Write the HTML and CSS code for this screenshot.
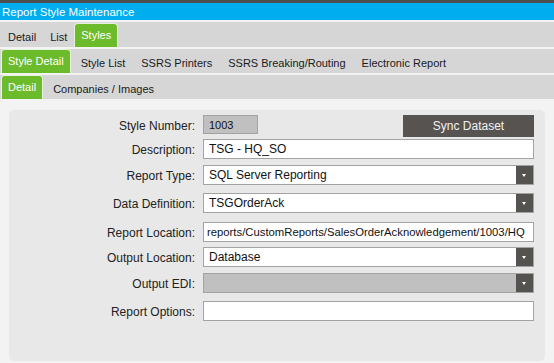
FILE: index.html
```html
<!DOCTYPE html>
<html lang="en">
<head>
    <meta charset="UTF-8">
    <meta name="viewport" content="width=device-width, initial-scale=1.0">
    <title>Report Style Maintenance</title>
    <link rel="stylesheet" href="styles.css">
</head>
<body>
    <div class="chrome"></div>
    <div class="titlebar">Report Style Maintenance</div>

    <!-- Main tabs -->
    <div class="tabbar tabbar-main">
        <span class="tab">Detail</span>
        <span class="tab">List</span>
        <span class="tab active">Styles</span>
    </div>

    <!-- Styles sub tabs -->
    <div class="tabbar">
        <span class="tab active">Style Detail</span>
        <span class="tab">Style List</span>
        <span class="tab">SSRS Printers</span>
        <span class="tab">SSRS Breaking/Routing</span>
        <span class="tab">Electronic Report</span>
    </div>

    <div class="tabbar">
        <span class="tab active">Detail</span>
        <span class="tab">Companies / Images</span>
    </div>

    <div class="panel">
        <div class="form">
            <label class="label">Style Number:</label>
            <div class="first-row">
                <input type="text" class="field field-number" value="1003" readonly>
                <button class="sync-btn">Sync Dataset</button>
            </div>

            <label class="label">Description:</label>
            <input type="text" class="field" value="TSG - HQ_SO">

            <label class="label">Report Type:</label>
            <div class="select">
                <span class="select-text">SQL Server Reporting</span>
                <span class="select-btn"></span>
            </div>

            <label class="label">Data Definition:</label>
            <div class="select">
                <span class="select-text">TSGOrderAck</span>
                <span class="select-btn"></span>
            </div>

            <label class="label">Report Location:</label>
            <div class="field field-path">reports/CustomReports/SalesOrderAcknowledgement/1003/HQ</div>

            <label class="label">Output Location:</label>
            <div class="select">
                <span class="select-text">Database</span>
                <span class="select-btn"></span>
            </div>

            <label class="label">Output EDI:</label>
            <div class="select disabled">
                <span class="select-text"></span>
                <span class="select-btn"></span>
            </div>

            <label class="label">Report Options:</label>
            <input type="text" class="field" value="">
        </div>
    </div>
</body>
</html>
```

FILE: styles.css
```css
* {
    box-sizing: border-box;
    margin: 0;
    padding: 0;
}

body {
    background: #f3f3f3;
    font-family: 'Liberation Sans', Arial, sans-serif;
    color: #222;
    height: 363px;
    overflow: hidden;
}

.chrome {
    height: 3px;
    background: #4f4f4f;
}

.titlebar {
    height: 17px;
    line-height: 18px;
    background: #00adef;
    color: white;
    font-size: 11.5px;
    padding-left: 2px;
}

/* Tab strips */
.tabbar {
    display: flex;
    align-items: stretch;
    height: 24px;
    margin-top: 2px;
    padding-left: 1px;
    background: #d6d6d6;
    font-size: 11px;
}

.tabbar-main {
    height: 25px;
    padding-top: 1px;
}

.tab {
    display: flex;
    align-items: center;
    padding: 4px 8px 0;
    color: #1a1a1a;
}

.tabbar-main .tab { padding: 4px 7px 0; }

.tab.active {
    background: #6cbb2a;
    color: white;
    border: 1px solid #e6f2dc;
    border-bottom: none;
    border-radius: 4px 4px 0 0;
    padding: 0 6px 1px;
}

.tab.active + .tab { padding-left: 10px; }
.tabbar-main .tab.active { padding: 0 6px 1px; }

/* Form panel */
.panel {
    margin: 11px 9px 0;
    height: 251px;
    background: #e8e8e8;
    border-radius: 5px;
    padding: 5px 11px 0 0;
}

.form {
    display: grid;
    grid-template-columns: 186px 1fr;
    grid-template-rows: 24px 26px 28px 29px 25px 26px 28px 20px;
    column-gap: 8px;
    align-items: start;
}

.label {
    text-align: right;
    font-size: 12px;
    line-height: 20px;
    padding-top: 1px;
}

.first-row {
    display: flex;
    align-items: flex-start;
}

.field {
    display: block;
    width: 100%;
    height: 20px;
    border: 1px solid #a3a3a3;
    background: white;
    font-family: inherit;
    font-size: 12px;
    color: #111;
    padding: 0 5px;
    line-height: 18px;
    outline: none;
}

.field-number {
    width: 55px;
    height: 19px;
    background: #c0c0c0;
    font-size: 11px;
    padding: 0 5px;
}

.field-path {
    padding: 0 2px 0 3px;
    font-size: 11.3px;
    white-space: nowrap;
    overflow: hidden;
}

.sync-btn {
    margin-left: auto;
    width: 131px;
    height: 22px;
    border: none;
    background: #575350;
    color: #f2f2f2;
    font-family: inherit;
    font-size: 12px;
}

.select {
    display: flex;
    height: 20px;
    border: 1px solid #a3a3a3;
    background: white;
    font-size: 12px;
}

.select.disabled { background: #c0c0c0; }

.select-text {
    flex: 1;
    padding-left: 5px;
    line-height: 18px;
    color: #111;
}

.select-btn {
    position: relative;
    width: 17px;
    background: #555350;
}

/* small white down arrow */
.select-btn::after {
    content: '';
    position: absolute;
    left: 6px;
    top: 8px;
    border-left: 2.5px solid transparent;
    border-right: 2.5px solid transparent;
    border-top: 3px solid white;
}
```
